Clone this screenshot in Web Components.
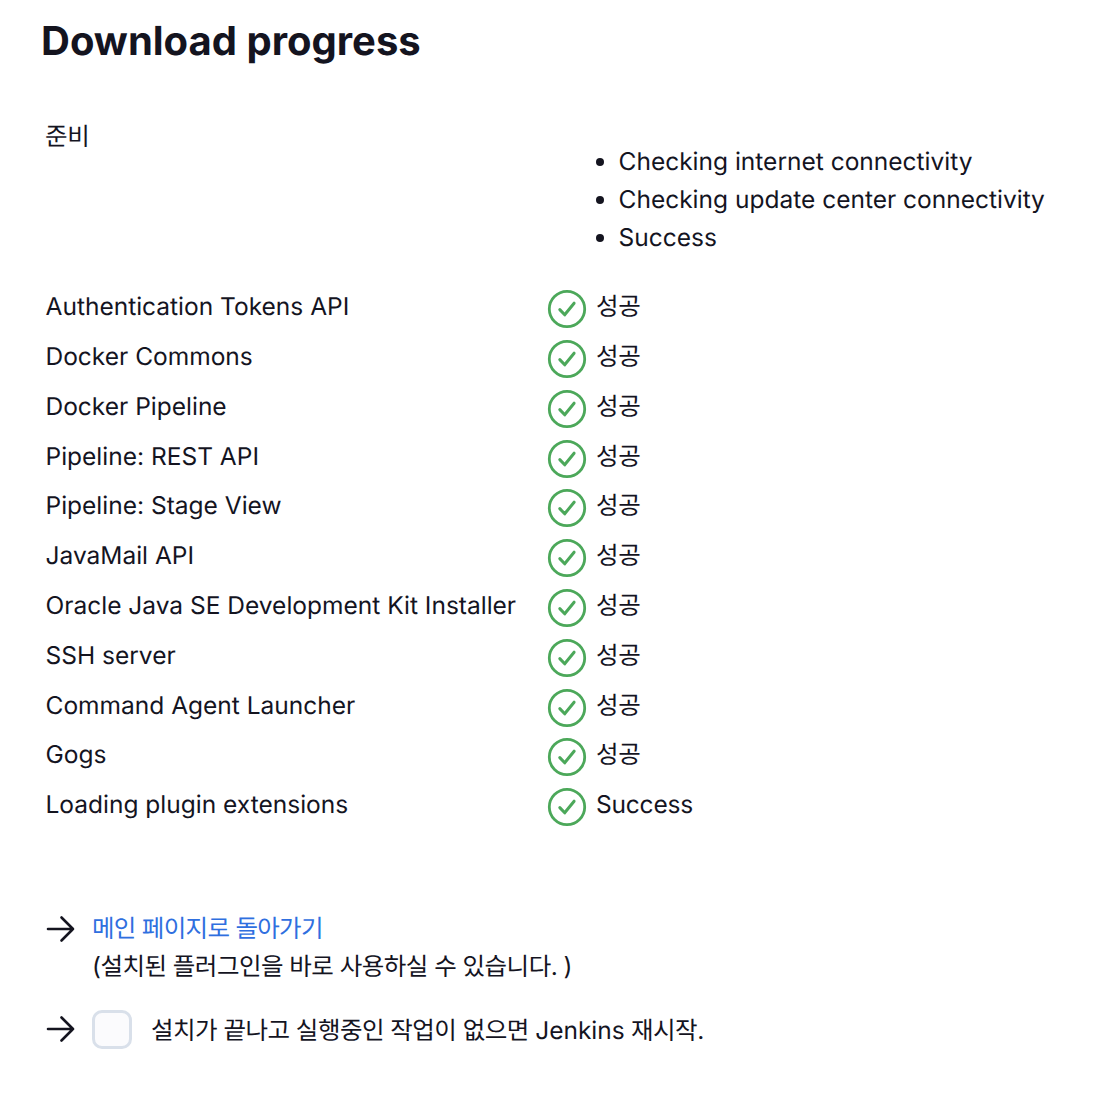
<!DOCTYPE html>
<html lang="ko">
<head>
<meta charset="utf-8">
<title>Download progress</title>
<style>
  html, body { margin: 0; background: #fff; }
  body {
    font-family: Inter, "Noto Sans CJK KR", sans-serif;
    color: #14141f;
    font-size: 24.5px;
    text-rendering: geometricPrecision;
  }
  .latin { letter-spacing: 0; }
</style>
</head>
<body>
<update-page>
  <span slot="title">Download progress</span>
  <prep-block>
    <span slot="label">준비</span>
    <li>Checking internet connectivity</li>
    <li>Checking update center connectivity</li>
    <li>Success</li>
  </prep-block>
  <plugin-table>
    <plugin-row name="Authentication Tokens API" status="성공"></plugin-row>
    <plugin-row name="Docker Commons" status="성공"></plugin-row>
    <plugin-row name="Docker Pipeline" status="성공"></plugin-row>
    <plugin-row name="Pipeline: REST API" status="성공"></plugin-row>
    <plugin-row name="Pipeline: Stage View" status="성공"></plugin-row>
    <plugin-row name="JavaMail API" status="성공"></plugin-row>
    <plugin-row name="Oracle Java SE Development Kit Installer" status="성공"></plugin-row>
    <plugin-row name="SSH server" status="성공"></plugin-row>
    <plugin-row name="Command Agent Launcher" status="성공"></plugin-row>
    <plugin-row name="Gogs" status="성공"></plugin-row>
    <plugin-row name="Loading plugin extensions" status="Success"></plugin-row>
  </plugin-table>
  <next-step class="first">
    <a slot="link" href="#">메인 페이지로 돌아가기</a>
    <span slot="note">(설치된 플러그인을 바로 사용하실 수 있습니다. )</span>
  </next-step>
  <next-step checkbox>
    <span slot="link">설치가 끝나고 실행중인 작업이 없으면 <span class="latin">Jenkins</span> 재시작.</span>
  </next-step>
</update-page>

<script>
class UpdatePage extends HTMLElement {
  constructor() {
    super();
    this.attachShadow({ mode: 'open' });
    this.shadowRoot.innerHTML = `
      <style>
        :host {
          display: block;
          padding: 16px 0 0 41px;
        }
        h1 {
          margin: 0 0 51px;
          font-size: 40px;
          line-height: 50px;
          font-weight: 700;
        }
      </style>
      <h1><slot name="title"></slot></h1>
      <slot></slot>
    `;
  }
}

class PrepBlock extends HTMLElement {
  constructor() {
    super();
    this.attachShadow({ mode: 'open' });
    this.shadowRoot.innerHTML = `
      <style>
        :host {
          display: block;
          padding-left: 5px;
        }
        .label {
          line-height: 38px;
          margin-left: -1px;
          letter-spacing: -0.3px;
        }
        ul {
          margin: -13px 0 0;
          padding: 0 0 0 572.5px;
          line-height: 38px;
        }
      </style>
      <div class="label"><slot name="label"></slot></div>
      <ul><slot></slot></ul>
    `;
  }
}

class PluginTable extends HTMLElement {
  constructor() {
    super();
    this.attachShadow({ mode: 'open' });
    this.shadowRoot.innerHTML = `
      <style>
        :host {
          display: block;
          padding: 31.25px 0 0 4.5px;
        }
      </style>
      <slot></slot>
    `;
  }
}

class StatusIcon extends HTMLElement {
  constructor() {
    super();
    this.attachShadow({ mode: 'open' });
    this.shadowRoot.innerHTML = `
      <style>
        :host {
          display: block;
          width: 40px;
          height: 40px;
          flex: none;
          margin: 2px 0 0 0;
        }
        svg {
          display: block;
        }
      </style>
      <svg width="40" height="40" viewBox="0 0 40 40" fill="none" stroke="#4ca85a">
        <circle cx="20" cy="20" r="17.7" stroke-width="2.8"/>
        <path d="M12.8 20.6l4.9 5.2 9.4-11.6" stroke-width="3" stroke-linecap="round" stroke-linejoin="round"/>
      </svg>
    `;
  }
}

class PluginRow extends HTMLElement {
  constructor() {
    super();
    this.attachShadow({ mode: 'open' });
    this.shadowRoot.innerHTML = `
      <style>
        :host {
          display: grid;
          grid-template-columns: 501.5px 41px 1fr;
          height: 49.8px;
          line-height: 38px;
        }
        .status {
          padding-left: 8px;
          letter-spacing: -0.2px;
        }
      </style>
      <div>${this.getAttribute('name')}</div>
      <status-icon></status-icon>
      <div class="status">${this.getAttribute('status')}</div>
    `;
  }
}

class NextStep extends HTMLElement {
  constructor() {
    super();
    this.attachShadow({ mode: 'open' });
    const box = this.hasAttribute('checkbox') ? '<span class="box"></span>' : '';
    this.shadowRoot.innerHTML = `
      <style>
        :host {
          display: flex;
          padding-left: 5px;
          line-height: 38px;
          letter-spacing: -0.52px;
        }
        :host(.first) {
          margin-top: 73.75px;
          margin-bottom: 26px;
        }
        :host(.first) svg {
          margin-top: 1.5px;
        }
        :host([checkbox]) svg {
          margin-top: -0.5px;
        }
        svg {
          flex: none;
          display: block;
          width: 30px;
          height: 38px;
          margin-right: 16px;
        }
        .box {
          flex: none;
          box-sizing: border-box;
          width: 40px;
          height: 39px;
          border: 3.5px solid #d9e0ea;
          border-radius: 10px;
          background: #fbfbfd;
          margin: -1px 19px 0 0;
        }
        .note {
          display: block;
        }
        ::slotted(a) {
          color: #2f6fdf;
          text-decoration: none;
          letter-spacing: -0.7px;
        }
      </style>
      <svg viewBox="0 0 30 38" fill="none" stroke="#14141f" stroke-width="2.6" stroke-linecap="round" stroke-linejoin="round">
        <path d="M2 19h25M15.5 7.5 27 19 15.5 30.5"/>
      </svg>
      ${box}
      <div>
        <slot name="link"></slot>
        <span class="note"><slot name="note"></slot></span>
      </div>
    `;
  }
}

customElements.define('update-page', UpdatePage);
customElements.define('prep-block', PrepBlock);
customElements.define('plugin-table', PluginTable);
customElements.define('status-icon', StatusIcon);
customElements.define('plugin-row', PluginRow);
customElements.define('next-step', NextStep);
</script>
</body>
</html>
